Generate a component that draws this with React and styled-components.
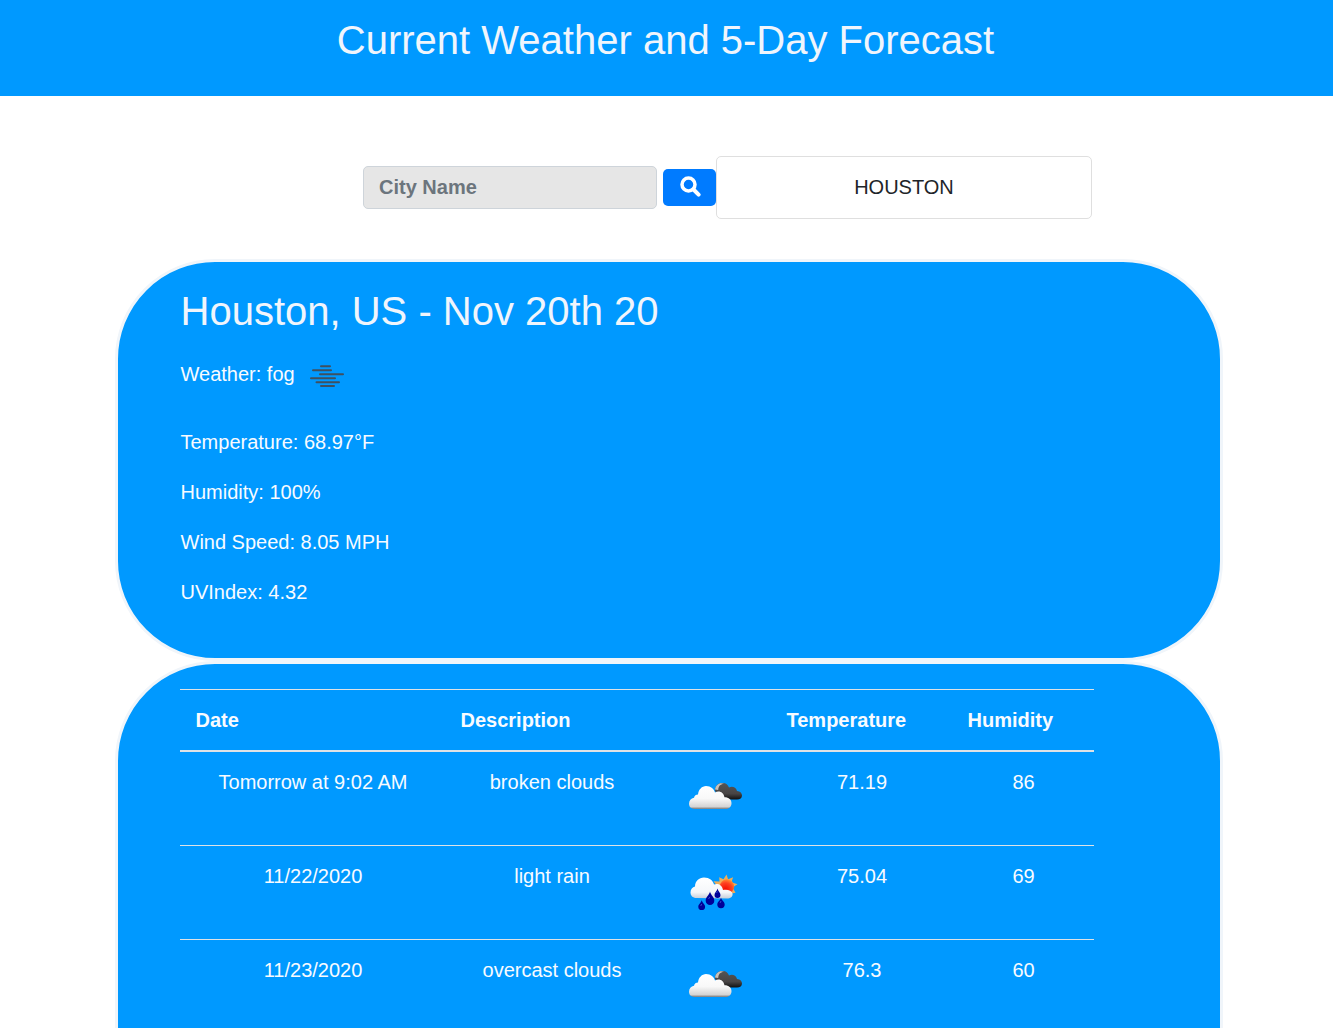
import React from 'react';
import styled, { createGlobalStyle } from 'styled-components';

const GlobalStyle = createGlobalStyle`
  *, *::before, *::after { box-sizing: border-box; }
  html, body { margin: 0; padding: 0; background: #fff; }
  body {
    font-family: "Liberation Sans", Arial, sans-serif;
    font-size: 20px;
    line-height: 30px;
    color: #212529;
  }
`;

const Page = styled.main`
  height: 100vh;
  overflow: hidden;
`;

const Header = styled.header`
  height: 96px;
  padding-top: 16px;
  background: #0099ff;
  text-align: center;
`;

const Title = styled.h1`
  margin: 0;
  font-size: 40px;
  font-weight: 400;
  line-height: 48px;
  color: #f0f5fc;
`;

const PageTitle = styled(Title)`
  padding-right: 2px;
`;

const SearchBar = styled.form`
  display: flex;
  align-items: center;
  margin: 60px 0 40px 363px;
`;

const CityInput = styled.input`
  width: 294px;
  height: 43px;
  margin-right: 6px;
  padding: 0 15px;
  border: 1px solid #ced4da;
  border-radius: 5px;
  background: #e6e6e6;
  font: bold 20px "Liberation Sans", Arial, sans-serif;
  &::placeholder { color: #6c757d; opacity: 1; }
`;

const SearchButton = styled.button`
  display: flex;
  align-items: center;
  justify-content: center;
  width: 53px;
  height: 37px;
  padding: 0 0 2px 1px;
  border: 0;
  border-radius: 5px;
  background: #007bff;
  color: #fff;
`;

const HistoryItem = styled.div`
  display: flex;
  align-items: center;
  justify-content: center;
  width: 376px;
  height: 63px;
  padding-bottom: 2px;
  border: 1px solid #dfdfdf;
  border-radius: 5px;
`;

const Panel = styled.section`
  width: 1108px;
  height: ${(p) => p.$height}px;
  margin-left: 115px;
  padding: 25px 62px;
  border: 3px solid #f0f5fa;
  border-radius: 100px;
  background: #0099ff;
  color: #f8fbff;
`;

const PanelText = styled.div`
  padding-left: 0.5px;
`;

const WeatherLine = styled.div`
  display: flex;
  align-items: center;
  height: 50px;
  margin: 14px 0 28px;
  gap: 14px;
  svg { margin-top: 3px; }
`;

const Reading = styled.p`
  margin: 0 0 20px;
`;

const Table = styled.div`
  width: 914px;
`;

const Row = styled.div`
  display: grid;
  grid-template-columns: 265px 213px 113px 181px 142px;
  height: ${(p) => (p.$first ? 93 : 94)}px;
  border-top: ${(p) => (p.$first ? 0 : 1)}px solid #dee2e6;
  text-align: center;
`;

const HeadRow = styled(Row)`
  height: 63px;
  border-bottom: 2px solid #dee2e6;
  font-weight: 700;
  text-align: left;
`;

const Cell = styled.div`
  padding: 15px 14.5px 15px 15.5px;
  white-space: nowrap;
`;

const IconCell = styled.div`
  padding: 15px 0 0 27px;
  text-align: left;
  line-height: 0;
`;

function SearchIcon() {
  return (
    <svg width="21" height="21" viewBox="0 0 21 21" fill="none" stroke="currentColor">
      <circle cx="8.500" cy="8.500" r="6.500" strokeWidth="3.500" />
      <path d="M13.500 13.500L18.600 18.600" strokeWidth="4" strokeLinecap="round" />
    </svg>
  );
}

function FogIcon() {
  return (
    <svg width="36" height="24" viewBox="0 0 36 24" stroke="#3f5060" strokeWidth="2" strokeLinecap="round">
      <path d="M12 2.200H21M4 6.200H22M11 10.200H34M2 14.200H26M7.500 18.200H30M12 22H25" />
    </svg>
  );
}

function CloudsIcon({ id }) {
  return (
    <svg width="60" height="54" viewBox="0 0 60 54">
      <defs>
        <linearGradient id={`${id}-light`} x1="0" y1="0" x2="0" y2="1">
          <stop offset="0" stopColor="#fff" />
          <stop offset=".55" stopColor="#f8f8f8" />
          <stop offset=".9" stopColor="#d4d4d4" />
          <stop offset="1" stopColor="#777" />
        </linearGradient>
        <linearGradient id={`${id}-dark`} x1="0" y1="0" x2="0" y2="1">
          <stop offset="0" stopColor="#555" />
          <stop offset=".65" stopColor="#484545" />
          <stop offset="1" stopColor="#111" />
        </linearGradient>
      </defs>
      <path d="M30 24C30 18 34 15.500 38 16c3 0 5 2 6 4.500 3-1.500 7-.5 8 3.500 3.500.3 5 2.300 5 4.500 0 2.500-2 4-5 4H38z" fill={`url(#${id}-dark)`} />
      <path d="M30 22.500C31 17.500 35 15 39 17c-4 0-5.500 2.300-5.800 6" fill="#c9c0b8" />
      <path d="M9.500 42c-3.500 0-5.500-2.300-5.500-5.200 0-3.300 2-5.300 5-6.100.5-2 2-3.200 4-3.200C13.500 22.500 17 19 21 19c5 0 8 3 9 6.500 4-2.500 8.500-.5 9.500 4.800 4.500 0 7 2.500 7 5.900 0 3.300-2.500 5.800-5.500 5.800z" fill={`url(#${id}-light)`} />
    </svg>
  );
}

function RainIcon() {
  return (
    <svg width="60" height="54" viewBox="0 0 60 54">
      <defs>
        <radialGradient id="sun" cx=".4" cy=".7" r=".75">
          <stop offset="0" stopColor="#f20d00" />
          <stop offset=".6" stopColor="#ff4020" />
          <stop offset="1" stopColor="#ff9b35" />
        </radialGradient>
        <linearGradient id="rain-cloud" x1="0" y1="0" x2="0" y2="1">
          <stop offset="0" stopColor="#fff" />
          <stop offset=".7" stopColor="#f5f7fa" />
          <stop offset="1" stopColor="#c6cdd9" />
        </linearGradient>
      </defs>
      <path d="M41.500 13.500l1.600 4.800 5-2-1.600 5 6 2-5 3 3 5.500-5.500 1-3 2-9-5-1-5-3.500-4.500 6 .3-.3-4.300 4.300 2z" fill="#efad58" />
      <circle cx="42" cy="25.500" r="7.200" fill="url(#sun)" />
      <path d="M11.500 37c-4 0-6-2.500-6-5.500 0-3.200 2-5.500 4.500-6 .2-5.300 4-9 9-9 5.500 0 9 3 10 7 3.500-1.500 8 0 9 5.500 4-.8 8.500 0 9.500 3.500.7 3-2 5-5.500 5z" fill="url(#rain-cloud)" />
      <g fill="#000099">
        <path d="M25 30.500c.6 3.500 4.300 5.300 4.300 9.200a4.300 4.300 0 01-8.600 0c0-3.900 3.700-5.700 4.300-9.200z" />
        <path d="M32.500 27.500c.3 2.600 3 3.900 3 6.500a3 3 0 01-6 0c0-2.600 2.700-3.900 3-6.500z" />
        <path d="M16.700 39c.4 2.800 3.400 4 3.400 6.700a3.400 3.400 0 01-6.800 0c0-2.700 3-3.900 3.400-6.700z" />
        <path d="M36 36.500c.4 2.900 3.700 4.100 3.700 7a3.700 3.700 0 01-7.400 0c0-2.900 3.300-4.100 3.700-7z" />
      </g>
      <path d="M23.500 38l1.300-2M31.500 32l1-1.500M35 42l1-2M15.700 45l1-2" stroke="#485bd0" strokeWidth=".8" />
    </svg>
  );
}

const forecast = [
  { date: 'Tomorrow at 9:02 AM', description: 'broken clouds', temperature: '71.19', humidity: '86' },
  { date: '11/22/2020', description: 'light rain', rain: true, temperature: '75.04', humidity: '69' },
  { date: '11/23/2020', description: 'overcast clouds', temperature: '76.3', humidity: '60' },
];

export default function App() {
  return (
    <Page>
      <GlobalStyle />
      <Header>
        <PageTitle>Current Weather and 5-Day Forecast</PageTitle>
      </Header>
      <SearchBar onSubmit={(e) => e.preventDefault()}>
        <CityInput placeholder="City Name" />
        <SearchButton aria-label="Search"><SearchIcon /></SearchButton>
        <HistoryItem>HOUSTON</HistoryItem>
      </SearchBar>
      <Panel $height={402}>
        <PanelText>
          <Title as="h2">Houston, US - Nov 20th 20</Title>
          <WeatherLine><span>Weather: fog</span><FogIcon /></WeatherLine>
          <Reading>Temperature: 68.97°F</Reading>
          <Reading>Humidity: 100%</Reading>
          <Reading>Wind Speed: 8.05 MPH</Reading>
          <Reading>UVIndex: 4.32</Reading>
        </PanelText>
      </Panel>
      <Panel $height={700}>
        <Table>
          <HeadRow>
            <Cell>Date</Cell>
            <Cell>Description</Cell>
            <Cell />
            <Cell>Temperature</Cell>
            <Cell>Humidity</Cell>
          </HeadRow>
          {forecast.map((day, i) => (
            <Row key={day.date} $first={i === 0}>
              <Cell>{day.date}</Cell>
              <Cell>{day.description}</Cell>
              <IconCell>{day.rain ? <RainIcon /> : <CloudsIcon id={`clouds-${i}`} />}</IconCell>
              <Cell>{day.temperature}</Cell>
              <Cell>{day.humidity}</Cell>
            </Row>
          ))}
        </Table>
      </Panel>
    </Page>
  );
}
